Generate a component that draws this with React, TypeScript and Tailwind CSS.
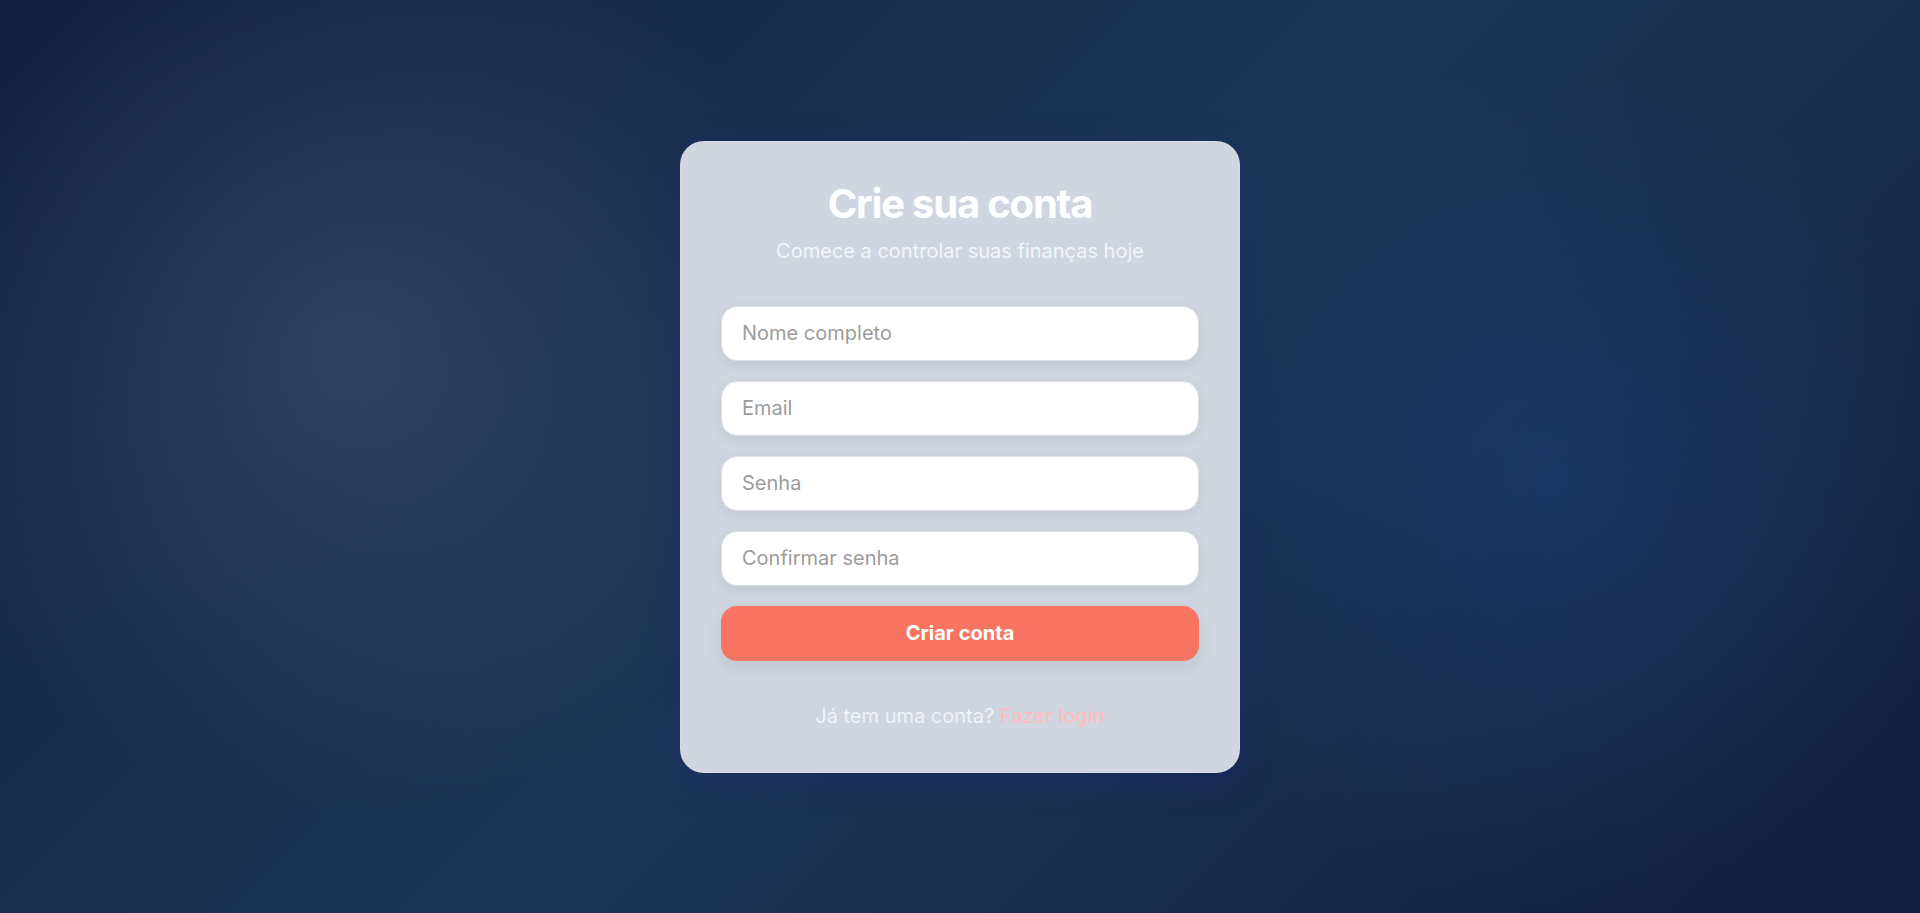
import React from "react";

const fields = [
  { type: "text", placeholder: "Nome completo" },
  { type: "email", placeholder: "Email" },
  { type: "password", placeholder: "Senha" },
  { type: "password", placeholder: "Confirmar senha" },
];

export default function App() {
  return (
    <div className="flex min-h-screen items-center justify-center bg-[radial-gradient(circle_at_18%_38%,rgba(130,140,160,0.24),transparent_28%),radial-gradient(circle_at_81%_53%,rgba(37,80,160,0.28),transparent_26%),linear-gradient(135deg,#0f1f3d_0%,#1c3658_50%,#111e3c_100%)] font-['Inter',sans-serif]">
      <div className="box-border w-[560px] rounded-3xl border border-white/10 bg-[#cfd6df] px-10 py-[42px] shadow-[0_8px_32px_0_rgba(31,38,135,0.37)]">
        <div className="text-center">
          <h1 className="text-[40px] leading-10 font-bold tracking-[-0.03em] text-white">Crie sua conta</h1>
          <p className="mt-[13px] text-xl text-white/75">Comece a controlar suas finanças hoje</p>
        </div>

        <form className="mt-[41px] flex flex-col gap-5" onSubmit={(e) => e.preventDefault()}>
          {fields.map((f) => (
            <input
              key={f.placeholder}
              type={f.type}
              placeholder={f.placeholder}
              className="h-[55px] w-full rounded-2xl border border-[#dcdfe4] bg-white px-5 text-xl text-gray-800 shadow-[0_4px_14px_rgba(0,0,0,0.07)] outline-none placeholder:text-[#9c9c9c]"
            />
          ))}
          <button
            type="submit"
            className="h-[55px] w-full rounded-2xl bg-[#f87462] text-xl font-bold text-white shadow-[0_6px_18px_rgba(0,0,0,0.08)]"
          >
            Criar conta
          </button>
        </form>

        <p className="mt-[41px] text-center text-xl text-white/70">
          Já tem uma conta?{" "}
          <a href="#" className="font-medium text-[#fbbdbf]">
            Fazer login
          </a>
        </p>
      </div>
    </div>
  );
}
